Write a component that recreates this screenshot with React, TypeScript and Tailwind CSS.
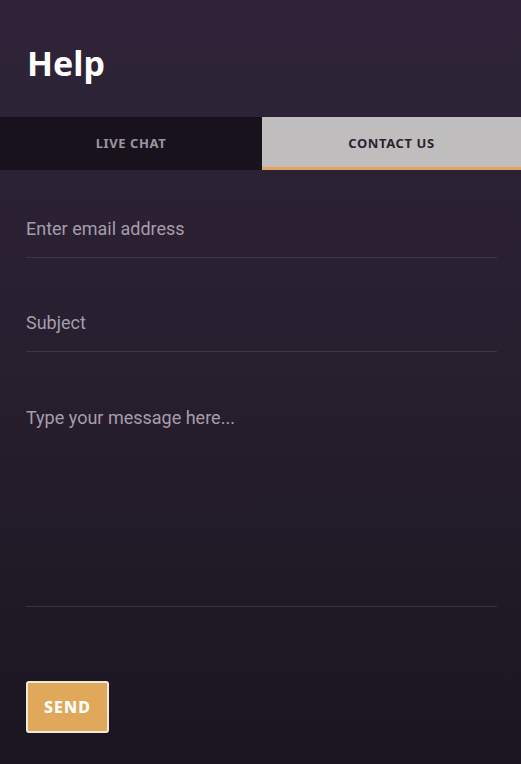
export default function App() {
    return (
        <div className="h-[764px] w-full bg-gradient-to-b from-[#2f2439] via-[#271e2e] to-[#1a1620] font-['Roboto',sans-serif]">
            <div className="px-[27px] pt-[42px] pb-[32px]">
                <h1 className="text-[34px] leading-[43px] font-bold text-white font-['Noto_Sans',sans-serif]">Help</h1>
            </div>

            <div className="grid grid-cols-[262px_1fr] h-[53px]">
                <button className="bg-[#18121d] text-[13px] font-bold tracking-[0.6px] text-[#9c95a0] font-['Noto_Sans',sans-serif]">
                    LIVE CHAT
                </button>
                <button className="bg-[#c0bdbf] border-b-[3px] border-[#e0a55a] pt-[3px] text-[13px] font-bold tracking-[0.6px] text-[#2a2430] font-['Noto_Sans',sans-serif]">
                    CONTACT US
                </button>
            </div>

            <form className="px-[26px] pt-[30px] flex flex-col" onSubmit={(e) => e.preventDefault()}>
                <input
                    type="email"
                    placeholder="Enter email address"
                    className="h-[58px] w-[471px] bg-transparent border-b border-[#3e3548] text-[18px] text-[#e5dfe8] placeholder:text-[#a69dab] outline-none"
                />
                <input
                    type="text"
                    placeholder="Subject"
                    className="mt-[36px] h-[58px] w-[471px] bg-transparent border-b border-[#3e3548] text-[18px] text-[#e5dfe8] placeholder:text-[#a69dab] outline-none"
                />
                <textarea
                    placeholder="Type your message here..."
                    className="mt-[36px] h-[219px] w-[471px] resize-none bg-transparent border-b border-[#3a3142] pt-[16px] text-[18px] leading-[27px] text-[#e5dfe8] placeholder:text-[#a69dab] outline-none"
                />
                <div className="mt-[74px]">
                    <button
                        type="submit"
                        className="h-[52px] w-[83px] rounded-[3px] border-2 border-[#f3e9da] bg-[#dfa85a] text-[16px] font-extrabold tracking-[1px] text-white font-['Noto_Sans',sans-serif]"
                    >
                        SEND
                    </button>
                </div>
            </form>
        </div>
    )
}
